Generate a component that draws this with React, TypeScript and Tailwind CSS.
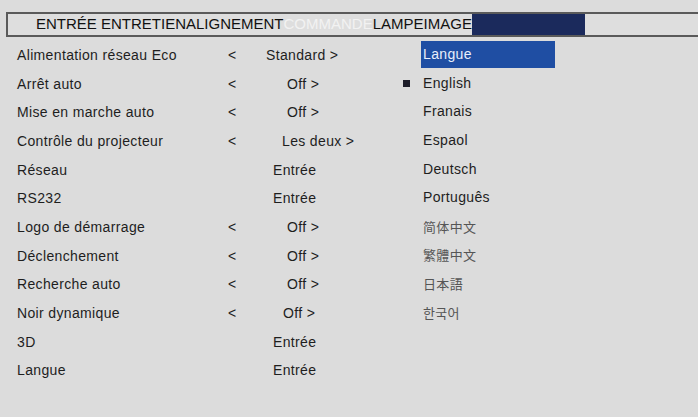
const rows: { label: string; arrow: boolean; value: string; pad: number }[] = [
  { label: "Alimentation réseau Eco", arrow: true, value: "Standard >", pad: 0 },
  { label: "Arrêt auto", arrow: true, value: "Off >", pad: 21 },
  { label: "Mise en marche auto", arrow: true, value: "Off >", pad: 21 },
  { label: "Contrôle du projecteur", arrow: true, value: "Les deux >", pad: 16 },
  { label: "Réseau", arrow: false, value: "Entrée", pad: 7 },
  { label: "RS232", arrow: false, value: "Entrée", pad: 7 },
  { label: "Logo de démarrage", arrow: true, value: "Off >", pad: 21 },
  { label: "Déclenchement", arrow: true, value: "Off >", pad: 21 },
  { label: "Recherche auto", arrow: true, value: "Off >", pad: 21 },
  { label: "Noir dynamique", arrow: true, value: "Off >", pad: 17 },
  { label: "3D", arrow: false, value: "Entrée", pad: 7 },
  { label: "Langue", arrow: false, value: "Entrée", pad: 7 },
];

const langs: { name: string; font: string }[] = [
  { name: "English", font: "font-['Liberation_Sans',sans-serif]" },
  { name: "Franais", font: "font-['Liberation_Sans',sans-serif]" },
  { name: "Espaol", font: "font-['Liberation_Sans',sans-serif]" },
  { name: "Deutsch", font: "font-['Liberation_Sans',sans-serif]" },
  { name: "Português", font: "font-['Liberation_Sans',sans-serif]" },
  { name: "简体中文", font: "font-['Noto_Sans_CJK_SC',sans-serif]" },
  { name: "繁體中文", font: "font-['Noto_Sans_CJK_TC',sans-serif]" },
  { name: "日本語", font: "font-['Noto_Sans_CJK_JP',sans-serif]" },
  { name: "한국어", font: "font-['Noto_Sans_CJK_KR',sans-serif]" },
];

export default function App() {
  return (
    <div className="w-[698px] h-[417px] overflow-hidden bg-[#dcdcdc] text-[#1e1e1e] text-[14px] tracking-[0.35px] font-['Liberation_Sans',Arial,sans-serif]">
      {/* tab bar */}
      <div className="mt-[12px] ml-[6px] h-[25px] flex items-stretch border-y-2 border-l-2 border-[#5a5a5a] bg-[#dedede]">
        <div className="pl-[28px] flex items-center whitespace-nowrap text-[15px] tracking-normal text-[#111]">
          <span>ENTRÉE ENTRETIENALIGNEMENT</span>
          <span className="text-[#f2f2f2]">COMMANDE</span>
          <span>LAMPEIMAGE</span>
        </div>
        <div className="w-[113px] bg-[#1b2a5c]" />
      </div>

      <div className="flex">
        {/* left settings list */}
        <div className="w-[403px] pl-[17px] pt-[4px]">
          {rows.map((r) => (
            <div key={r.label} className="h-[28.7px] flex items-center whitespace-nowrap">
              <span className="w-[211px]">{r.label}</span>
              <span className="w-[38px]">{r.arrow ? "<" : ""}</span>
              <span style={{ paddingLeft: r.pad }}>{r.value}</span>
            </div>
          ))}
        </div>

        {/* language submenu */}
        <div className="pt-[3px]">
          <div className="h-[28.7px] flex items-center">
            <span className="w-[18px]" />
            <span className="w-[134px] h-[27px] flex items-center pl-[2px] bg-[#1f4ea3] text-[#e8eefc]">Langue</span>
          </div>
          {langs.map((l, i) => (
            <div key={l.name} className="h-[28.7px] flex items-center whitespace-nowrap">
              <span className="w-[20px] flex items-center">
                {i === 0 && <span className="w-[7px] h-[7px] bg-[#1e1e2a]" />}
              </span>
              <span className={`${l.font} ${i >= 5 ? "text-[13px] text-[#555]" : ""}`}>{l.name}</span>
            </div>
          ))}
        </div>
      </div>
    </div>
  );
}
